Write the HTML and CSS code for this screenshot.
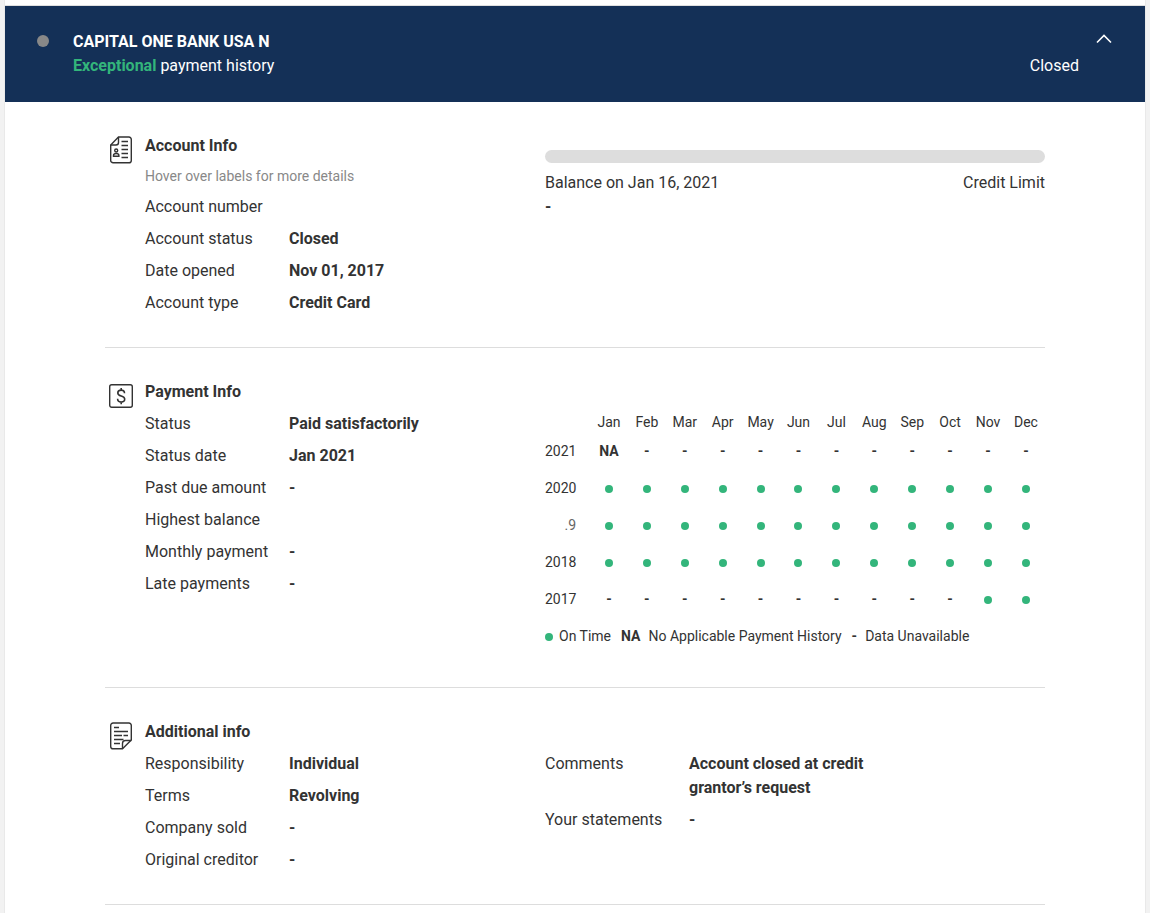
FILE: index.html
```html
<!DOCTYPE html>
<html lang="en">
<head>
    <meta charset="UTF-8">
    <meta name="viewport" content="width=device-width, initial-scale=1.0">
    <title>Account details</title>
    <link rel="stylesheet" href="styles.css">
</head>
<body>
    <main class="account-card">
        <header class="account-header">
            <span class="account-dot"></span>
            <div class="account-name">
                <h1>CAPITAL ONE BANK USA N</h1>
                <p><strong class="rating">Exceptional</strong> payment history</p>
            </div>
            <span class="account-state">Closed</span>
            <button class="toggle-btn" type="button" aria-label="Collapse account">
                <svg width="16" height="10" viewBox="0 0 16 10" fill="none" stroke="currentColor" stroke-width="1.6">
                    <path d="M1 8.5 8 1.5l7 7"/>
                </svg>
            </button>
        </header>

        <div class="account-body">
            <section class="info-section">
                <div class="info-main">
                    <svg class="info-icon" width="24" height="28" viewBox="0 0 24 28" fill="none" stroke="currentColor" stroke-width="1.4">
                        <path d="M9.500 1h10.400a2.400 2.400 0 0 1 2.400 2.400v21a2.400 2.400 0 0 1-2.400 2.400H4.100a2.400 2.400 0 0 1-2.400-2.400V9z"/>
                        <path d="M9.500 1v5.500A2.500 2.500 0 0 1 7 9H1.700"/>
                        <path d="M12.500 5.500h6.500M12.500 9.500h6.500M12.500 13.500h6.500M12.500 17.500h6.500M12.500 21.500h6.500"/>
                        <circle cx="7.200" cy="14.500" r="1.500"/>
                        <path d="M4.500 20.300v-.8a2.700 2 0 0 1 5.400 0v.8z"/>
                    </svg>
                    <div>
                        <h2>Account Info</h2>
                        <p class="hint">Hover over labels for more details</p>
                        <dl class="details">
                            <div><dt>Account number</dt><dd></dd></div>
                            <div><dt>Account status</dt><dd>Closed</dd></div>
                            <div><dt>Date opened</dt><dd>Nov 01, 2017</dd></div>
                            <div><dt>Account type</dt><dd>Credit Card</dd></div>
                        </dl>
                    </div>
                </div>
                <div class="balance">
                    <div class="balance-bar"></div>
                    <div class="balance-labels">
                        <span>Balance on Jan 16, 2021</span>
                        <span>Credit Limit</span>
                    </div>
                    <strong>-</strong>
                </div>
            </section>

            <section class="info-section">
                <div class="info-main">
                    <svg class="info-icon" width="24" height="28" viewBox="0 0 24 28" fill="none" stroke="currentColor" stroke-width="1.4">
                        <rect x=".7" y="2.700" width="22.600" height="22.600" rx="2"/>
                        <path stroke-width="1.600" d="M15.500 11.300c0-2-1.300-3.200-3.400-3.200-2 0-3.300 1.100-3.300 2.800 0 4 6.900 2.200 6.900 6.200 0 1.900-1.500 3-3.500 3-2.200 0-3.600-1.200-3.600-3.300M12.200 6v2.100M12.200 20.100v2.200"/>
                    </svg>
                    <div>
                        <h2>Payment Info</h2>
                        <dl class="details">
                            <div><dt>Status</dt><dd>Paid satisfactorily</dd></div>
                            <div><dt>Status date</dt><dd>Jan 2021</dd></div>
                            <div><dt>Past due amount</dt><dd>-</dd></div>
                            <div><dt>Highest balance</dt><dd></dd></div>
                            <div><dt>Monthly payment</dt><dd>-</dd></div>
                            <div><dt>Late payments</dt><dd>-</dd></div>
                        </dl>
                    </div>
                </div>
                <div class="history">
                    <table>
                        <thead>
                            <tr>
                                <td class="year"></td>
                                <th>Jan</th><th>Feb</th><th>Mar</th><th>Apr</th><th>May</th><th>Jun</th>
                                <th>Jul</th><th>Aug</th><th>Sep</th><th>Oct</th><th>Nov</th><th>Dec</th>
                            </tr>
                        </thead>
                        <tbody>
                            <tr>
                                <th class="year">2021</th>
                                <td>NA</td><td>-</td><td>-</td><td>-</td><td>-</td><td>-</td>
                                <td>-</td><td>-</td><td>-</td><td>-</td><td>-</td><td>-</td>
                            </tr>
                            <tr>
                                <th class="year">2020</th>
                                <td><i class="dot"></i></td><td><i class="dot"></i></td><td><i class="dot"></i></td><td><i class="dot"></i></td>
                                <td><i class="dot"></i></td><td><i class="dot"></i></td><td><i class="dot"></i></td><td><i class="dot"></i></td>
                                <td><i class="dot"></i></td><td><i class="dot"></i></td><td><i class="dot"></i></td><td><i class="dot"></i></td>
                            </tr>
                            <tr>
                                <th class="year year-partial">.9</th>
                                <td><i class="dot"></i></td><td><i class="dot"></i></td><td><i class="dot"></i></td><td><i class="dot"></i></td>
                                <td><i class="dot"></i></td><td><i class="dot"></i></td><td><i class="dot"></i></td><td><i class="dot"></i></td>
                                <td><i class="dot"></i></td><td><i class="dot"></i></td><td><i class="dot"></i></td><td><i class="dot"></i></td>
                            </tr>
                            <tr>
                                <th class="year">2018</th>
                                <td><i class="dot"></i></td><td><i class="dot"></i></td><td><i class="dot"></i></td><td><i class="dot"></i></td>
                                <td><i class="dot"></i></td><td><i class="dot"></i></td><td><i class="dot"></i></td><td><i class="dot"></i></td>
                                <td><i class="dot"></i></td><td><i class="dot"></i></td><td><i class="dot"></i></td><td><i class="dot"></i></td>
                            </tr>
                            <tr>
                                <th class="year">2017</th>
                                <td>-</td><td>-</td><td>-</td><td>-</td><td>-</td><td>-</td>
                                <td>-</td><td>-</td><td>-</td><td>-</td><td><i class="dot"></i></td><td><i class="dot"></i></td>
                            </tr>
                        </tbody>
                    </table>
                    <ul class="legend">
                        <li class="legend-dot"><i class="dot"></i>On Time</li>
                        <li><b>NA</b>No Applicable Payment History</li>
                        <li><b>-</b>Data Unavailable</li>
                    </ul>
                </div>
            </section>

            <section class="info-section">
                <div class="info-main">
                    <svg class="info-icon" width="24" height="28" viewBox="0 0 24 28" fill="none" stroke="currentColor" stroke-width="1.4">
                        <path d="M22.300 18V3.400A2.400 2.400 0 0 0 19.900 1H4.100a2.400 2.400 0 0 0-2.400 2.400v21a2.400 2.400 0 0 0 2.400 2.400h9.400z"/>
                        <path d="M13.500 26.800v-5.300a3 3 0 0 1 3-3h5.800"/>
                        <path d="M5 5.500h5M5 9.500h14M5 13.500h8M14.500 13.500h4.500M5 17.500h9.500M5 21.500h6"/>
                    </svg>
                    <div>
                        <h2>Additional info</h2>
                        <dl class="details">
                            <div><dt>Responsibility</dt><dd>Individual</dd></div>
                            <div><dt>Terms</dt><dd>Revolving</dd></div>
                            <div><dt>Company sold</dt><dd>-</dd></div>
                            <div><dt>Original creditor</dt><dd>-</dd></div>
                        </dl>
                    </div>
                </div>
                <dl class="details comments">
                    <div><dt>Comments</dt><dd>Account closed at credit grantor’s request</dd></div>
                    <div><dt>Your statements</dt><dd>-</dd></div>
                </dl>
            </section>
        </div>
    </main>
</body>
</html>
```
FILE: styles.css
```css
* {
    box-sizing: border-box;
}

body {
    margin: 0;
    padding: 0 5px;
    background-color: #f2f2f2;
    color: #333;
    font-family: Roboto, "Liberation Sans", sans-serif;
    font-size: 16px;
    line-height: 24px;
}

h1, h2, p, dl, dd, ul {
    margin: 0;
    padding: 0;
}

h1, h2 {
    font-size: 16px;
    font-weight: bold;
}

.account-card {
    min-height: 100vh;
    padding-top: 5px;
    background-color: white;
    box-shadow: 0 0 1px #bbb;
}

.account-header {
    display: flex;
    align-items: flex-start;
    padding: 24px 33px 24px 32px;
    background-color: #143057;
    color: white;
    border-top: 1px solid #e0e0e0;
    background-clip: padding-box;
}

.account-dot {
    width: 12px;
    height: 12px;
    margin: 5px 24px 0 0;
    border-radius: 50%;
    background-color: #888;
}

.account-name {
    flex: 1;
}

.rating {
    color: #33b57b;
}

.account-state {
    align-self: flex-end;
}

.toggle-btn {
    display: flex;
    margin-left: 17px;
    padding: 4px 0;
    border: none;
    background: none;
    color: white;
    cursor: pointer;
}

.account-body {
    padding: 0 100px;
}

.info-section {
    display: grid;
    grid-template-columns: 22fr 25fr;
    padding: 32px 0;
    border-bottom: 1px solid #ddd;
}

.info-main {
    display: flex;
}

.info-icon {
    flex: none;
    margin: 2px 12px 0 4px;
}

.hint {
    margin-top: 8px;
    font-size: 14px;
    line-height: 21px;
    color: #888;
}

.details > div {
    display: flex;
    margin-top: 8px;
}

.details dt {
    flex: none;
    width: 144px;
}

.details dd {
    max-width: 200px;
    min-height: 24px;
    font-weight: bold;
}

.balance {
    padding-top: 16px;
}

.balance-bar {
    height: 13px;
    margin-bottom: 8px;
    border-radius: 7px;
    background-color: #ddd;
}

.balance-labels {
    display: flex;
    justify-content: space-between;
}

.balance strong {
    display: block;
}

.history {
    padding-top: 32px;
    font-size: 14px;
    line-height: 21px;
}

.history table {
    width: 100%;
    table-layout: fixed;
    border-collapse: collapse;
}

.history th,
.history td {
    padding: 0;
    text-align: center;
}

.history th {
    font-weight: normal;
}

.history tbody td {
    height: 37px;
    font-weight: bold;
}

.history .year {
    width: 45px;
    text-align: left;
}

.history .year-partial {
    padding-right: 14px;
    text-align: right;
    color: #666;
}

.dot {
    display: inline-block;
    width: 8px;
    height: 8px;
    border-radius: 50%;
    background-color: #33b57b;
}

.legend {
    display: flex;
    gap: 10px;
    padding: 8px 0;
    list-style: none;
}

.legend li {
    display: flex;
    align-items: center;
    gap: 8px;
}

.legend .legend-dot {
    gap: 6px;
}

.comments {
    padding-top: 24px;
}
```
